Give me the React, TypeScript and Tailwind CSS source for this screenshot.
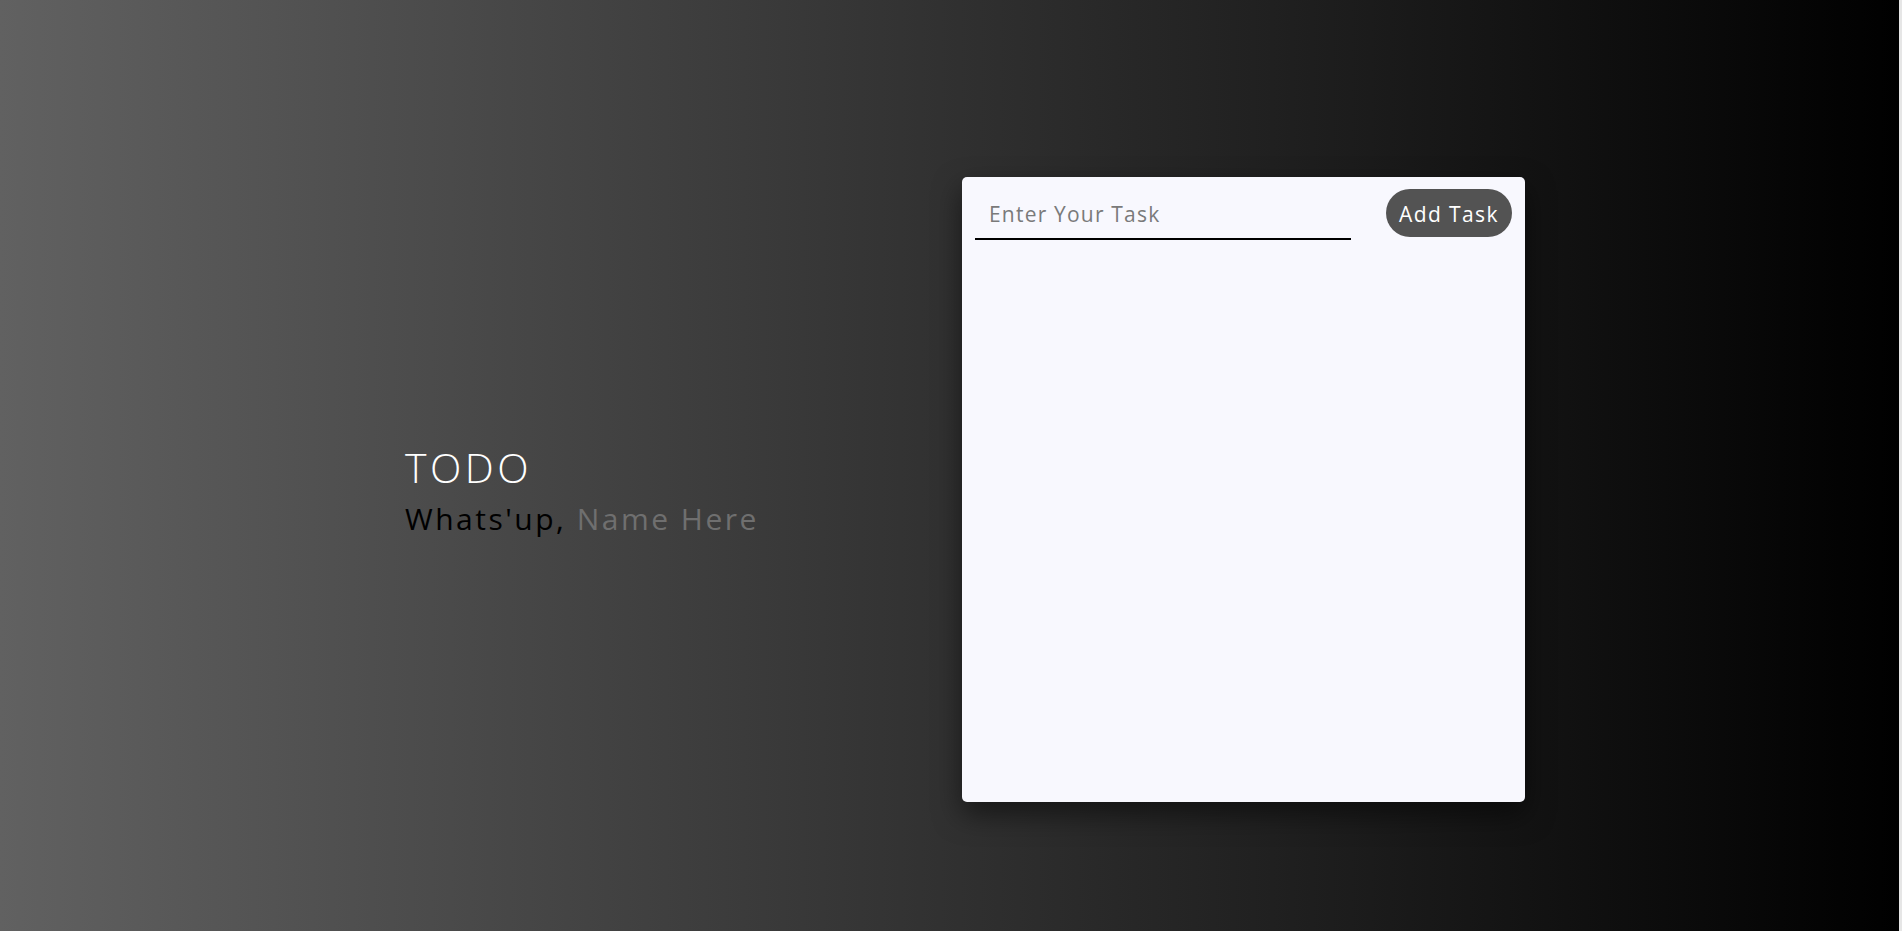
import React, { useState } from 'react';

const font = "font-['Open_Sans',Lato,sans-serif]";

const App: React.FC = () => {
    const [task, setTask] = useState('');
    const [tasks, setTasks] = useState<string[]>([]);

    const handleAdd = () => {
        if (!task.trim()) return;
        setTasks([...tasks, task.trim()]);
        setTask('');
    };

    return (
        <div className={`flex h-[931px] w-full overflow-hidden ${font}`}>
            <div className="flex flex-1 items-center bg-[linear-gradient(to_right,#616161,#000000)] pl-[405px] pt-[48px]">
                {/* Greeting */}
                <div className="w-[557px]">
                    <h1 className="text-[41px] font-light leading-[50px] tracking-[3.5px] text-white">TODO</h1>
                    <p className="mt-[8px] text-[30px] leading-[38px] tracking-[2.5px] text-black">
                        Whats'up, <span className="text-[#6f6f6f]">Name Here</span>
                    </p>
                </div>

                {/* Task card */}
                <div className="flex h-[625px] w-[563px] flex-col rounded-[5px] bg-[#f8f8fe] px-[13px] pt-[12px] shadow-[0_12px_28px_rgba(0,0,0,0.5)]">
                    <div className="flex items-start justify-between">
                        <input
                            value={task}
                            onChange={(e) => setTask(e.target.value)}
                            placeholder="Enter Your Task"
                            className="h-[51px] w-[376px] border-b-2 border-black bg-transparent px-[14px] text-[21px] tracking-[1.2px] text-black outline-none placeholder:text-[#7a7a7a]"
                        />
                        <button
                            onClick={handleAdd}
                            className="h-[48px] w-[126px] rounded-full bg-[#535353] pt-[3px] text-[21px] tracking-[1.4px] text-white"
                        >
                            Add Task
                        </button>
                    </div>
                    <ul className="mt-4 space-y-2">
                        {tasks.map((t, i) => (
                            <li key={i} className="text-[18px] text-gray-800">{t}</li>
                        ))}
                    </ul>
                </div>
            </div>
            <div className="w-[3px] bg-[#e6e6e6]"></div>
        </div>
    );
};

export default App;
